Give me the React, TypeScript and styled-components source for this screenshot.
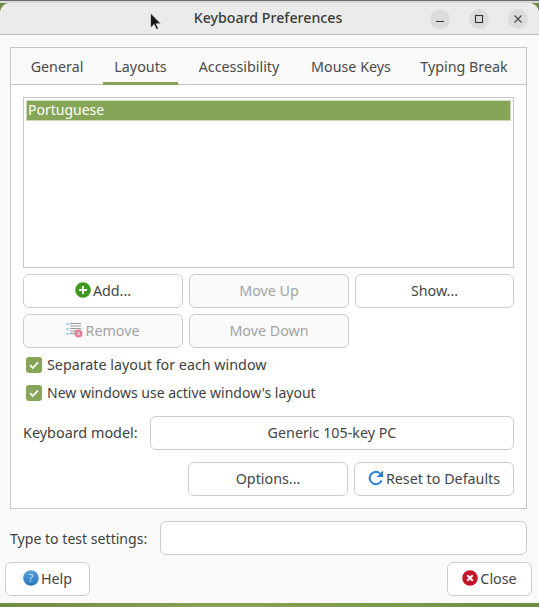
import React from "react";
import styled, { createGlobalStyle } from "styled-components";

const Global = createGlobalStyle`
  html, body { margin: 0; padding: 0; width: 539px; height: 607px; overflow: hidden; background: #7f9a4e; }
  * { box-sizing: border-box; }
`;
const Screen = styled.div`
  position: relative; width: 539px; height: 607px; overflow: hidden;
  display: flex; flex-direction: column;
  font-family: "Noto Sans", "Open Sans", sans-serif; font-size: 14.3px; color: #3f3f3f;
  background: linear-gradient(90deg, #6f8a45, #8aa155 40%, #7d9a4c 70%, #6f8a45);
`;
const TopStrip = styled.div`height: 3px; background: #d8d8d8; border-top: 1px solid #6a6a6a;`;
const Win = styled.div`
  height: 600px; background: #fafafa; display: flex; flex-direction: column;
  border-radius: 10px 10px 0 0; overflow: hidden;
`;
const TitleBar = styled.div`
  height: 32px; flex: none; background: #ebebeb; border-bottom: 1px solid #bdbdbd;
  display: flex; align-items: center; position: relative; padding-right: 11px; justify-content: flex-end; gap: 19px;
`;
const Title = styled.div`
  position: absolute; left: 0; right: 3px; top: 5px; text-align: center; font-size: 14.2px; font-weight: 500; color: #3a3a3a; line-height: 20px;
`;
const WinBtn = styled.div`
  width: 20px; height: 20px; border-radius: 50%; background: #dcdcdc; display: flex; align-items: center; justify-content: center; position: relative;
`;
const Body = styled.div`
  flex: 1; padding: 12px 12px 7px 10px; display: flex; flex-direction: column;
`;
const Notebook = styled.div`
  height: 462px; border: 1px solid #c6c6c6; background: #fff; display: flex; flex-direction: column; flex: none;
`;
const Tabs = styled.div`
  height: 37px; flex: none; background: #fafafa; border-bottom: 1px solid #c6c6c6; display: flex;
`;
const Tab = styled.div<{ $w: number; $active?: boolean }>`
  width: ${p => p.$w}px; height: 37px; display: flex; align-items: center; justify-content: center; color: #4a4a4a; padding-bottom: 1px;
  border-bottom: 3px solid ${p => (p.$active ? "#86a556" : "transparent")};
  padding-top: 3px; white-space: nowrap;
`;
const Page = styled.div`
  flex: 1; padding: 12px 12px 0 12px; display: flex; flex-direction: column;
`;
const List = styled.div`
  height: 171px; flex: none; border: 1px solid #c6c6c6; background: #fff; padding: 2px;
`;
const ListRow = styled.div`
  height: 21px; background: #87a556; border: 1px solid #cfd8b8; color: #fff; font-size: 14px; line-height: 18px; padding-left: 1px;
`;
const BtnGrid = styled.div`
  display: grid; grid-template-columns: 160px 160px 159px; column-gap: 6px; row-gap: 6px; margin-top: 6px; grid-auto-rows: 34px;
`;
const Btn = styled.div<{ $disabled?: boolean }>`
  border: 1px solid #cdcdcd; border-radius: 6px; background: ${p => (p.$disabled ? "#fafafa" : "#fff")};
  color: ${p => (p.$disabled ? "#a3a3a3" : "#454545")}; display: flex; align-items: center; justify-content: center; gap: 2px; white-space: nowrap;
  padding-bottom: 2px;
`;
const Checks = styled.div`
  display: flex; flex-direction: column; gap: 8px; margin: 7px 0 0 3px;
`;
const CheckRow = styled.div`
  display: flex; align-items: center; gap: 5px; height: 20px; color: #3f3f3f; white-space: nowrap;
`;
const CheckText = styled.span<{ $size: number }>`margin-bottom: 2px; font-size: ${p => p.$size}px;`;
const Check = styled.div`
  width: 16px; height: 16px; border-radius: 3px; background: #87a556; display: flex; align-items: center; justify-content: center; flex: none;
`;
const ModelRow = styled.div`
  display: flex; align-items: center; margin-top: 13px; height: 34px;
`;
const ModelLabel = styled.div`width: 127px; flex: none; color: #3f3f3f; padding-bottom: 2px; font-size: 14.4px;`;
const ModelBtn = styled(Btn)`flex: 1; height: 34px;`;
const OptionsRow = styled.div`
  display: flex; justify-content: flex-end; gap: 6px; margin-top: 12px;
`;
const OptBtn = styled(Btn)`width: 160px; height: 34px;`;
const TestRow = styled.div`
  display: flex; align-items: center; margin-top: 12px; height: 34px;
`;
const TestLabel = styled.div`width: 150px; flex: none; color: #3f3f3f; font-size: 14.1px;`;
const TestInput = styled.div`flex: 1; height: 34px; border: 1px solid #cdcdcd; border-radius: 6px; background: #fff;`;
const Footer = styled.div`
  display: flex; justify-content: space-between; margin: 7px -5px 0 -5px;
`;
const FootBtn = styled(Btn)`width: 85px; height: 34px;`;
const Cursor = styled.svg`position: absolute; left: 149px; top: 12px;`;

const Tick = () => (
  <Check>
    <svg width="12" height="12" viewBox="0 0 12 12"><path d="M2 6.2l2.8 2.8L10 3.4" fill="none" stroke="#fff" strokeWidth="1.8" /></svg>
  </Check>
);

export default function App() {
  return (
    <Screen>
      <Global />
      <TopStrip />
      <Win>
        <TitleBar>
          <Title>Keyboard Preferences</Title>
          <WinBtn><svg width="10" height="10" viewBox="0 0 10 10"><path d="M1 7.5h8" stroke="#333" strokeWidth="1.2" /></svg></WinBtn>
          <WinBtn><svg width="10" height="10" viewBox="0 0 10 10"><rect x="1.5" y="1.5" width="7" height="7" fill="none" stroke="#333" strokeWidth="1.1" /></svg></WinBtn>
          <WinBtn><svg width="10" height="10" viewBox="0 0 10 10"><path d="M1.5 1.5l7 7M8.5 1.5l-7 7" stroke="#444" strokeWidth="1.1" /></svg></WinBtn>
        </TitleBar>
        <Body>
          <Notebook>
            <Tabs>
              <Tab $w={92}>General</Tab>
              <Tab $w={75} $active>Layouts</Tab>
              <Tab $w={122}>Accessibility</Tab>
              <Tab $w={102}>Mouse Keys</Tab>
              <Tab $w={124}>Typing Break</Tab>
            </Tabs>
            <Page>
              <List><ListRow>Portuguese</ListRow></List>
              <BtnGrid>
                <Btn>
                  <svg width="16" height="16" viewBox="0 0 16 16"><circle cx="8" cy="8" r="7.8" fill="#3d9a1f" /><path d="M8 4v8M4 8h8" stroke="#fff" strokeWidth="2" /></svg>
                  Add...
                </Btn>
                <Btn $disabled>Move Up</Btn>
                <Btn>Show...</Btn>
                <Btn $disabled>
                  <svg width="17" height="16" viewBox="0 0 17 16">
                    <path d="M4 1.5h11M4 4h11M4 6.5h11M4 9h7M4 11.5h5" stroke="#9a9a9a" strokeWidth="1" />
                    <circle cx="1.5" cy="2" r="1.3" fill="#9fd0ee" /><circle cx="1.5" cy="7" r="1.3" fill="#9fd0ee" /><circle cx="1.5" cy="12" r="1.3" fill="#9fd0ee" />
                    <circle cx="12.5" cy="11.5" r="4" fill="#e57f95" /><path d="M11 10l3 3M14 10l-3 3" stroke="#fff" strokeWidth="1" />
                  </svg>
                  Remove
                </Btn>
                <Btn $disabled>Move Down</Btn>
              </BtnGrid>
              <Checks>
                <CheckRow><Tick /><CheckText $size={14.3}>Separate layout for each window</CheckText></CheckRow>
                <CheckRow><Tick /><CheckText $size={14}>New windows use active window's layout</CheckText></CheckRow>
              </Checks>
              <ModelRow>
                <ModelLabel>Keyboard model:</ModelLabel>
                <ModelBtn>Generic 105-key PC</ModelBtn>
              </ModelRow>
              <OptionsRow>
                <OptBtn>Options...</OptBtn>
                <OptBtn>
                  <svg width="16" height="16" viewBox="0 0 16 16"><path d="M13.6 10.5A6.2 6.2 0 1 1 11.8 3.2" fill="none" stroke="#2a80d2" strokeWidth="2" /><path d="M15 .6v6.4H8.6z" fill="#2a80d2" /></svg>
                  Reset to Defaults
                </OptBtn>
              </OptionsRow>
            </Page>
          </Notebook>
          <TestRow>
            <TestLabel>Type to test settings:</TestLabel>
            <TestInput />
          </TestRow>
          <Footer>
            <FootBtn>
              <svg width="16" height="16" viewBox="0 0 16 16">
                <defs><linearGradient id="helpGrad" x1="0" y1="0" x2="0" y2="1"><stop offset="0" stopColor="#5aa0dc" /><stop offset="1" stopColor="#2a76ba" /></linearGradient></defs>
                <circle cx="8" cy="8" r="7.8" fill="url(#helpGrad)" />
                <text x="8" y="12" fontSize="11" fontFamily="Noto Sans" textAnchor="middle" fill="#cfe4f6">?</text>
              </svg>
              Help
            </FootBtn>
            <FootBtn>
              <svg width="16" height="16" viewBox="0 0 16 16"><circle cx="8" cy="8" r="7.8" fill="#c4162a" /><path d="M5.3 5.3l5.4 5.4M10.7 5.3l-5.4 5.4" stroke="#fff" strokeWidth="2" /></svg>
              Close
            </FootBtn>
          </Footer>
        </Body>
      </Win>
      <Cursor width="14" height="20" viewBox="0 0 14 20">
        <path d="M1.5 1v15l3.6-3.4 2.4 5 2-1-2.3-4.8H12z" fill="#1a1a1a" stroke="#eee" strokeWidth="0.7" />
      </Cursor>
    </Screen>
  );
}
